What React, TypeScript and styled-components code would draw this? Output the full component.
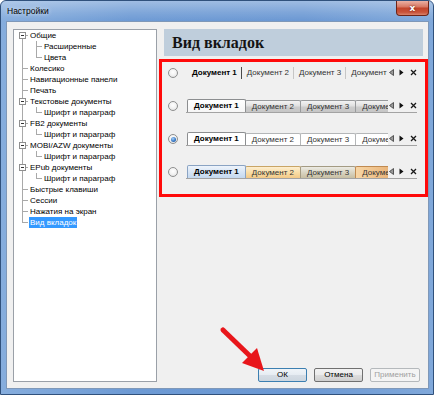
import React from "react";
import styled, { createGlobalStyle } from "styled-components";

const Global = createGlobalStyle`
  html, body { margin: 0; padding: 0; background: #ffffff; }
  body { font-family: "Liberation Sans", Arial, sans-serif; }
  * { box-sizing: border-box; }
`;

const Window = styled.div`
  position: relative;
  width: 434px;
  height: 395px;
  display: flex;
  flex-direction: column;
  padding: 0 4px 5px 5px;
  border: 1px solid #30517c;
  border-radius: 6px 6px 0 0;
  background: linear-gradient(90deg, #86addd 0%, #6d9ad4 30%, #6b98d3 70%, #80a8da 100%);
  overflow: hidden;
`;

const TitleBar = styled.div`
  height: 20px;
  flex: 0 0 20px;
  display: flex;
  align-items: flex-start;
  background: linear-gradient(180deg, rgba(255,255,255,0.35) 0%, rgba(255,255,255,0.12) 60%, rgba(255,255,255,0) 100%);
  margin: 0 -4px 0 -5px;
  padding: 0 4px 0 5px;
`;

const Title = styled.span`
  padding: 5px 0 0 1px;
  font-size: 8.5px;
  line-height: 11px;
  color: #000;
  text-shadow: 0 0 4px rgba(255, 255, 255, 0.9);
`;

const CloseBtn = styled.span`
  margin-left: auto;
  width: 33px;
  height: 15px;
  border: 1px solid #6e2417;
  border-top: none;
  border-radius: 0 0 4px 4px;
  background: linear-gradient(180deg, #eab0a3 0%, #d87a66 40%, #c2452c 52%, #c9533a 80%, #d9836c 100%);
  display: flex;
  align-items: center;
  justify-content: center;
  color: #fff;
  font: bold 9px "DejaVu Sans", sans-serif;
  text-shadow: 0 0 2px #5a1a10;
`;

const Content = styled.div`
  flex: 1;
  display: flex;
  border: 1px solid #7f98b8;
  background: #f0f0f0;
  padding: 7px 0 6px 6px;
  gap: 2px;
`;

const Tree = styled.div`
  width: 144px;
  flex: 0 0 144px;
  background: #ffffff;
  border: 1px solid #9aa0a8;
  padding: 0 0 0 1px;
  display: flex;
  flex-direction: column;
`;

const TreeRow = styled.div`
  height: 11px;
  display: flex;
  align-items: stretch;
`;

const Guide = styled.span<{ $up: boolean; $down: boolean; $h: boolean }>`
  position: relative;
  flex: 0 0 14px;
  height: 11px;
  &::before {
    content: "";
    position: absolute;
    left: 7px;
    width: 1px;
    top: ${(p) => (p.$up ? "0" : "5px")};
    bottom: ${(p) => (p.$down ? "0" : "5px")};
    background: #a9a9a9;
  }
  &::after {
    content: "";
    position: absolute;
    left: 7px;
    right: 1px;
    top: 5px;
    height: 1px;
    background: #a9a9a9;
    display: ${(p) => (p.$h ? "block" : "none")};
  }
`;

const Expander = styled.span`
  position: absolute;
  z-index: 1;
  left: 4px;
  top: 2px;
  width: 7px;
  height: 7px;
  border: 1px solid #8f8f8f;
  background: #fff;
  &::after {
    content: "";
    position: absolute;
    left: 1px;
    top: 2px;
    width: 3px;
    height: 1px;
    background: #333;
  }
`;

const Label = styled.span<{ $selected?: boolean }>`
  padding: 0 1px;
  font-size: 8px;
  line-height: 11px;
  white-space: nowrap;
  color: ${(p) => (p.$selected ? "#ffffff" : "#000000")};
  background: ${(p) => (p.$selected ? "#3399ff" : "transparent")};
`;

const RightCol = styled.div`
  width: 269px;
  flex: 0 0 269px;
  display: flex;
  flex-direction: column;
`;

const Heading = styled.div`
  margin: 0 5px;
  height: 27px;
  flex: 0 0 27px;
  background: #bfcedc;
  padding-left: 8px;
  font: bold 16px/28px "Liberation Serif", "Times New Roman", serif;
  color: #141414;
`;

const Options = styled.div`
  margin-top: 3px;
  border: 3px solid #ff0a0a;
  padding: 4px 0 15px 6px;
  display: flex;
  flex-direction: column;
  gap: 19px;
`;

const OptionRow = styled.div`
  height: 14px;
  display: flex;
  align-items: center;
  gap: 8px;
`;

const Radio = styled.span<{ $on: boolean }>`
  width: 10px;
  height: 10px;
  flex: 0 0 10px;
  border-radius: 50%;
  border: 1px solid #8e8f8f;
  background: radial-gradient(circle at 50% 40%, #ffffff 0%, #f2f2f2 50%, #d8d8d8 100%);
  display: flex;
  align-items: center;
  justify-content: center;
  &::after {
    content: "";
    width: 5px;
    height: 5px;
    border-radius: 50%;
    background: ${(p) =>
      p.$on ? "radial-gradient(circle at 40% 35%, #a9d0f7 0%, #3a7cc8 55%, #17468c 100%)" : "transparent"};
  }
`;

const Strip = styled.div<{ $lined: boolean }>`
  width: 231px;
  height: 14px;
  display: flex;
  align-items: ${(p) => (p.$lined ? "flex-end" : "center")};
  border-bottom: 1px solid ${(p) => (p.$lined ? "#a3a3a3" : "transparent")};
`;

const TabsArea = styled.div`
  width: 202px;
  flex: 0 0 202px;
  height: 13px;
  overflow: hidden;
  display: flex;
  align-items: flex-end;
  padding-left: 1px;
`;

type Tone = "grayActive" | "gray" | "whiteActive" | "white" | "blue" | "orange" | "tan" | "orange2";

const toneBg: Record<Tone, string> = {
  grayActive: "linear-gradient(180deg, #ffffff 0%, #f6f6f6 100%)",
  gray: "linear-gradient(180deg, #f3f3f3 0%, #e0e0e0 45%, #cccccc 55%, #c6c6c6 100%)",
  whiteActive: "#ffffff",
  white: "#ffffff",
  blue: "linear-gradient(180deg, #eef4fb 0%, #d7e5f5 50%, #c4d8ef 100%)",
  orange: "linear-gradient(180deg, #fdeecf 0%, #f9dda6 50%, #f2c987 100%)",
  tan: "linear-gradient(180deg, #ecebe4 0%, #d9d4c2 50%, #c8bfa3 100%)",
  orange2: "linear-gradient(90deg, #f7d6a6 0%, #eab57a 60%, #d99a5c 100%)",
};

const toneBorder: Record<Tone, string> = {
  grayActive: "#8c8e90",
  gray: "#989a9c",
  whiteActive: "#8c8e90",
  white: "#b4b6b8",
  blue: "#8aa3c3",
  orange: "#c9a565",
  tan: "#a49b83",
  orange2: "#c08a50",
};

const Tab = styled.span<{ $tone: Tone; $active?: boolean }>`
  flex: 0 0 auto;
  height: ${(p) => (p.$active ? "13px" : "12px")};
  padding: 0 6px;
  margin-left: -1px;
  &:first-child { margin-left: 0; }
  border: 1px solid ${(p) => toneBorder[p.$tone]};
  border-bottom: none;
  border-radius: 2px 2px 0 0;
  background: ${(p) => toneBg[p.$tone]};
  position: relative;
  z-index: ${(p) => (p.$active ? 1 : 0)};
  font-size: 8px;
  line-height: 11px;
  font-weight: ${(p) => (p.$active ? "bold" : "normal")};
  color: ${(p) => (p.$active ? "#000" : "#333")};
  white-space: nowrap;
`;

const FlatTab = styled.span<{ $active?: boolean }>`
  flex: 0 0 auto;
  height: 12px;
  padding: 0 4px 0 5px;
  border-right: 1px solid ${(p) => (p.$active ? "#4a4a4a" : "#c6c6c6")};
  font-size: 8px;
  line-height: 12px;
  font-weight: ${(p) => (p.$active ? "bold" : "normal")};
  color: ${(p) => (p.$active ? "#000" : "#333")};
  white-space: nowrap;
`;

const Controls = styled.div`
  flex: 1;
  height: 12px;
  display: flex;
  align-items: center;
  padding-left: 1px;
  gap: 5px;
  align-self: center;
`;

const Buttons = styled.div`
  margin-top: auto;
  display: flex;
  justify-content: flex-end;
  gap: 7px;
  padding-right: 8px;
`;

const Btn = styled.button<{ $def?: boolean; $w: number }>`
  width: ${(p) => p.$w}px;
  height: 14px;
  padding: 0;
  font: 8px/12px "Liberation Sans", Arial, sans-serif;
  color: #000;
  border: 1px solid ${(p) => (p.$def ? "#3c7fb1" : "#707070")};
  border-radius: 2px;
  background: ${(p) =>
    p.$def
      ? "linear-gradient(180deg, #f0f4f8 0%, #e6ecf2 50%, #d6dde5 51%, #cdd6df 100%)"
      : "linear-gradient(180deg, #f2f2f2 0%, #ebebeb 50%, #dddddd 51%, #cfcfcf 100%)"};
  &:disabled {
    border-color: #b5b9bc;
    background: #f4f4f4;
    color: #a0a0a0;
  }
`;

const ArrowOverlay = styled.svg`
  position: absolute;
  left: -1px;
  top: -1px;
  pointer-events: none;
`;

const LeftTri = () => (
  <svg width="5" height="7" viewBox="0 0 5 7">
    <polygon points="4.5,0.5 0.5,3.5 4.5,6.5" fill="#9a9a9a" stroke="#3a3a3a" strokeWidth="0.8" />
  </svg>
);
const RightTri = () => (
  <svg width="5" height="7" viewBox="0 0 5 7">
    <polygon points="0.5,0.5 4.5,3.5 0.5,6.5" fill="#111" />
  </svg>
);
const Cross = () => (
  <svg width="7" height="7" viewBox="0 0 7 7" style={{ marginLeft: 1 }}>
    <path d="M1 1 L6 6 M6 1 L1 6" stroke="#1a1a1a" strokeWidth="1.3" />
  </svg>
);

type TreeItem = { label: string; level: 0 | 1; exp?: boolean; lastChild?: boolean; selected?: boolean };

const tree: TreeItem[] = [
  { label: "Общие", level: 0, exp: true },
  { label: "Расширенные", level: 1 },
  { label: "Цвета", level: 1, lastChild: true },
  { label: "Колесико", level: 0 },
  { label: "Навигационные панели", level: 0 },
  { label: "Печать", level: 0 },
  { label: "Текстовые документы", level: 0, exp: true },
  { label: "Шрифт и параграф", level: 1, lastChild: true },
  { label: "FB2 документы", level: 0, exp: true },
  { label: "Шрифт и параграф", level: 1, lastChild: true },
  { label: "MOBI/AZW документы", level: 0, exp: true },
  { label: "Шрифт и параграф", level: 1, lastChild: true },
  { label: "EPub документы", level: 0, exp: true },
  { label: "Шрифт и параграф", level: 1, lastChild: true },
  { label: "Быстрые клавиши", level: 0 },
  { label: "Сессии", level: 0 },
  { label: "Нажатия на экран", level: 0 },
  { label: "Вид вкладок", level: 0, selected: true },
];

const docs = ["Документ 1", "Документ 2", "Документ 3", "Документ 4"];

const tabRows: { tones: Tone[]; on: boolean }[] = [
  { tones: ["grayActive", "gray", "gray", "gray"], on: false },
  { tones: ["whiteActive", "white", "white", "white"], on: true },
  { tones: ["blue", "orange", "tan", "orange2"], on: false },
];

export default function App() {
  const lastIdx = tree.length - 1;
  return (
    <>
      <Global />
      <Window>
        <TitleBar>
          <Title>Настройки</Title>
          <CloseBtn>x</CloseBtn>
        </TitleBar>
        <Content>
          <Tree>
            {tree.map((it, i) => (
              <TreeRow key={i}>
                {it.level === 0 ? (
                  <Guide $up={i !== 0} $down={i !== lastIdx} $h>
                    {it.exp && <Expander />}
                  </Guide>
                ) : (
                  <>
                    <Guide $up $down $h={false} />
                    <Guide $up $down={!it.lastChild} $h />
                  </>
                )}
                <Label $selected={it.selected}>{it.label}</Label>
              </TreeRow>
            ))}
          </Tree>
          <RightCol>
            <Heading>Вид вкладок</Heading>
            <Options>
              <OptionRow>
                <Radio $on={false} />
                <Strip $lined={false}>
                  <TabsArea>
                    {docs.map((d, i) => (
                      <FlatTab key={d} $active={i === 0}>
                        {d}
                      </FlatTab>
                    ))}
                  </TabsArea>
                  <Controls>
                    <LeftTri />
                    <RightTri />
                    <Cross />
                  </Controls>
                </Strip>
              </OptionRow>
              {tabRows.map((r, ri) => (
                <OptionRow key={ri}>
                  <Radio $on={r.on} />
                  <Strip $lined>
                    <TabsArea>
                      {docs.map((d, i) => (
                        <Tab key={d} $tone={r.tones[i]} $active={i === 0}>
                          {d}
                        </Tab>
                      ))}
                    </TabsArea>
                    <Controls>
                      <LeftTri />
                      <RightTri />
                      <Cross />
                    </Controls>
                  </Strip>
                </OptionRow>
              ))}
            </Options>
            <Buttons>
              <Btn $def $w={49}>ОК</Btn>
              <Btn $w={49}>Отмена</Btn>
              <Btn $w={50} disabled>
                Применить
              </Btn>
            </Buttons>
          </RightCol>
        </Content>
        <ArrowOverlay width="434" height="395" viewBox="0 0 434 395">
          <line x1="223" y1="330" x2="250" y2="356" stroke="#e8161b" strokeWidth="5" strokeLinecap="round" />
          <polygon points="264,371 242,363 257,348" fill="#e8161b" />
        </ArrowOverlay>
      </Window>
    </>
  );
}
